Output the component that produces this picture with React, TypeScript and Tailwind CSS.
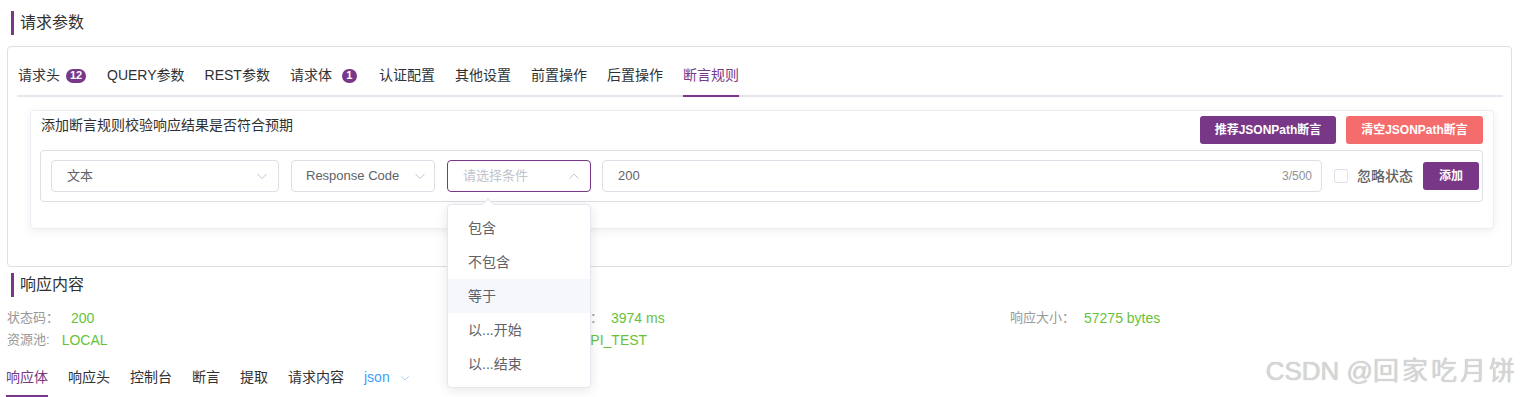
import React from "react";

const ChevronDown: React.FC<{ className?: string }> = ({ className }) => (
  <svg viewBox="0 0 12 12" className={className} fill="none" stroke="currentColor" strokeWidth="1">
    <path d="M1.5 4l4.5 4.5 4.5-4.5" />
  </svg>
);

const ChevronUp: React.FC<{ className?: string }> = ({ className }) => (
  <svg viewBox="0 0 12 12" className={className} fill="none" stroke="currentColor" strokeWidth="1">
    <path d="M1.5 8.5l4.5-4.5 4.5 4.5" />
  </svg>
);

const SectionTitle: React.FC<{ title: string; className?: string }> = ({ title, className }) => (
  <div className={`flex items-center ${className ?? ""}`}>
    <span className="ml-[11px] h-[24px] w-[3px] bg-[#783887]" />
    <span className="ml-[6px] text-[16px] text-[#303133]">{title}</span>
  </div>
);

const Badge: React.FC<{ text: string; className?: string }> = ({ text, className }) => (
  <span
    className={`flex h-[14px] items-center justify-center rounded-full bg-[#783887] text-[11px] font-bold leading-none text-white ${className ?? ""}`}
  >
    {text}
  </span>
);

const conditions = ["包含", "不包含", "等于", "以...开始", "以...结束"];

const bottomTabs = ["响应头", "控制台", "断言", "提取", "请求内容"];

export default function App() {
  return (
    <div className="relative h-[397px] w-full overflow-hidden bg-white font-['Liberation_Sans','Noto_Sans_CJK_SC',sans-serif]">
      <SectionTitle title="请求参数" className="h-[46px]" />

      {/* request params card */}
      <div className="ml-[7px] mr-[10px] rounded-[4px] border border-[#dcdfe6] pb-[37px] pl-[9px] pr-[8px] pt-[9px]">
        <div className="relative flex h-[41px] items-center gap-[20px] border-b-2 border-[#e4e7ed] pl-[1px] text-[14px] text-[#303133]">
          <div className="flex items-center">
            <span>请求头</span>
            <Badge text="12" className="ml-[6px] mr-[1px] w-[20px]" />
          </div>
          <span>QUERY参数</span>
          <span>REST参数</span>
          <div className="flex items-center">
            <span>请求体</span>
            <Badge text="1" className="ml-[10px] mr-[2px] w-[15px]" />
          </div>
          <span>认证配置</span>
          <span>其他设置</span>
          <span>前置操作</span>
          <span>后置操作</span>
          <span className="relative flex h-full items-center text-[#783887]">
            断言规则
            <span className="absolute bottom-[-2px] left-0 right-0 h-[2px] bg-[#783887]" />
          </span>
        </div>

        <div className="ml-[13px] mr-[9px] mt-[13px] rounded-[4px] border border-[#ebeef5] bg-white pb-[26px] pl-[9px] pr-[10px] pt-[5px] shadow-[0_2px_10px_rgba(0,0,0,0.07)]">
          <div className="flex items-start justify-between">
            <span className="pl-[1px] text-[14px] leading-[18px] text-[#303133]">添加断言规则校验响应结果是否符合预期</span>
            <div className="flex gap-[10px]">
              <button className="flex h-[28px] w-[136px] items-center justify-center rounded-[3px] bg-[#783887] text-[12px] font-bold text-white">
                推荐JSONPath断言
              </button>
              <button className="flex h-[28px] w-[137px] items-center justify-center rounded-[3px] bg-[#f56c6c] text-[12px] font-bold text-white">
                清空JSONPath断言
              </button>
            </div>
          </div>

          <div className="mt-[6px] flex items-center gap-[12px] rounded-[4px] border border-[#dcdfe6] py-[9px] pl-[10px] pr-[3px]">
            <div className="flex h-[32px] w-[228px] items-center justify-between rounded-[4px] border border-[#dcdfe6] pl-[15px] pr-[10px] text-[13px] text-[#606266]">
              <span>文本</span>
              <ChevronDown className="h-[12px] w-[12px] text-[#c0c4cc]" />
            </div>
            <div className="flex h-[32px] w-[144px] items-center justify-between rounded-[4px] border border-[#dcdfe6] pl-[14px] pr-[8px] text-[13px] text-[#606266]">
              <span>Response Code</span>
              <ChevronDown className="h-[12px] w-[12px] text-[#c0c4cc]" />
            </div>
            <div className="relative h-[32px] w-[144px]">
              <div className="flex h-full items-center justify-between rounded-[4px] border border-[#783887] pl-[15px] pr-[10px] text-[13px] text-[#c0c4cc]">
                <span>请选择条件</span>
                <ChevronUp className="h-[12px] w-[12px] text-[#c0c4cc]" />
              </div>
              <div className="absolute left-0 top-[44px] z-20 w-[144px] rounded-[4px] border border-[#e4e7ed] bg-white py-[6px] shadow-[0_2px_12px_rgba(0,0,0,0.1)]">
                <span className="absolute left-[36px] top-[-5px] h-[8px] w-[8px] rotate-45 border-l border-t border-[#e4e7ed] bg-white" />
                {conditions.map((c) => (
                  <div
                    key={c}
                    className={`h-[34px] px-[20px] text-[14px] leading-[34px] text-[#606266] ${c === "等于" ? "bg-[#f5f7fa]" : ""}`}
                  >
                    {c}
                  </div>
                ))}
              </div>
            </div>
            <div className="-ml-[1px] flex h-[32px] flex-1 items-center justify-between rounded-[4px] border border-[#dcdfe6] pl-[15px] pr-[9px]">
              <span className="text-[13px] text-[#606266]">200</span>
              <span className="text-[12px] text-[#909399]">3/500</span>
            </div>
            <span className="mr-[-3px] h-[14px] w-[14px] rounded-[2px] border border-[#dcdfe6] bg-white" />
            <span className="text-[14px] font-medium text-[#606266]">忽略状态</span>
            <button className="-ml-[2px] flex h-[28px] w-[56px] items-center justify-center rounded-[3px] bg-[#783887] text-[12px] font-bold text-white">
              添加
            </button>
          </div>
        </div>
      </div>

      <SectionTitle title="响应内容" className="h-[36px]" />

      <div className="mt-[4px] grid grid-cols-[503px_500px_1fr] pl-[7px] leading-[22px]">
        <div className="flex items-center">
          <span className="text-[13px] text-[#999]">状态码：</span>
          <span className="ml-[12px] text-[14px] text-[#67c23a]">200</span>
        </div>
        <div className="flex items-center">
          <span className="w-[93px] text-right text-[13px] text-[#999]">响应时间：</span>
          <span className="ml-[8px] text-[14px] text-[#67c23a]">3974 ms</span>
        </div>
        <div className="flex items-center">
          <span className="text-[13px] text-[#999]">响应大小：</span>
          <span className="ml-[9px] text-[14px] text-[#67c23a]">57275 bytes</span>
        </div>
        <div className="flex items-center">
          <span className="text-[13px] text-[#999]">资源池:</span>
          <span className="ml-[12px] text-[14px] text-[#67c23a]">LOCAL</span>
        </div>
        <div className="flex items-center">
          <span className="w-[71px] text-right text-[13px] text-[#999]">运行环境：</span>
          <span className="text-[14px] text-[#67c23a]">API_TEST</span>
        </div>
        <div />
      </div>

      <div className="mt-[7px] flex h-[39px] items-center gap-[20px] pl-[6px] text-[14px] text-[#303133]">
        <span className="relative flex h-full items-center text-[#783887]">
          响应体
          <span className="absolute bottom-0 left-0 right-0 h-[2px] bg-[#783887]" />
        </span>
        {bottomTabs.map((t) => (
          <span key={t}>{t}</span>
        ))}
        <span className="flex items-center text-[#409eff]">
          json
          <ChevronDown className="ml-[10px] h-[10px] w-[10px] text-[#9ec5f5]" />
        </span>
      </div>

      <div className="absolute bottom-[6px] right-[4px] text-[26px] text-[#d6d6d6] [text-shadow:0_0_1px_#b8b8b8]">
        CSDN @<span className="tracking-[3px]">回家吃月饼</span>
      </div>
    </div>
  );
}
